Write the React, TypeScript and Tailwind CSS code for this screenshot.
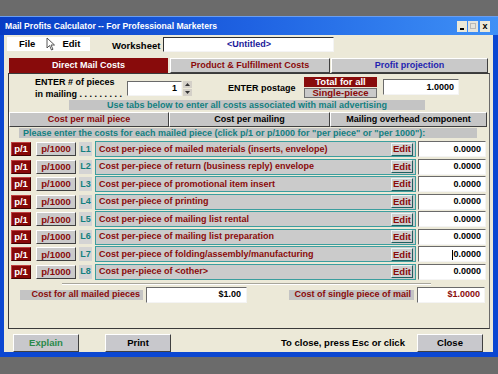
import React from "react";

const raised = "border border-t-white border-l-white border-r-[#404040] border-b-[#404040]";
const sunken = "border border-t-[#6a6a6a] border-l-[#6a6a6a] border-r-[#f4f4f4] border-b-[#f4f4f4]";

const rows = [
  "Cost per-piece of mailed materials (inserts, envelope)",
  "Cost per-piece of return (business reply) envelope",
  "Cost per-piece of promotional item insert",
  "Cost per-piece of printing",
  "Cost per-piece of mailing list rental",
  "Cost per-piece of mailing list preparation",
  "Cost per-piece of folding/assembly/manufacturing",
  "Cost per-piece of <other>",
];

function CostRow({ n, label }: { n: number; label: string }) {
  return (
    <div className="flex h-[16px] items-center">
      <div className="ml-[2px] flex h-[14px] w-[20px] items-center justify-center bg-[#860808] text-[9.5px] text-white border border-t-[#c04040] border-l-[#c04040] border-r-[#400000] border-b-[#400000]">p/1</div>
      <div className={`ml-[5px] flex h-[14px] w-[40px] items-center justify-center bg-[#cacaca] text-[9.5px] text-[#8a0a0a] ${raised}`}>p/1000</div>
      <div className="ml-[3px] flex h-[14px] w-[13px] items-center justify-center bg-[#d4d4d4] text-[#137f7f]">L{n}</div>
      <div className="ml-[3px] flex h-[16px] w-[321px] items-center border border-[#3c9e9e] bg-[#cbcbcb] pl-[3px] pr-[2px]">
        <span className="flex-1 text-[#8a0a0a]">{label}</span>
        <div className="flex h-[13px] w-[22px] items-center justify-center border border-t-[#e8f4f4] border-l-[#e8f4f4] border-r-[#1f6060] border-b-[#1f6060] bg-[#cfcfcf] text-[9.5px] text-[#8a0a0a]">Edit</div>
      </div>
      <div className={`ml-[2px] flex h-[16px] w-[68px] items-center justify-end bg-white pr-[4px] text-black ${sunken}`}>
        {n === 7 ? <span className="relative"><span className="absolute -left-[1px] top-[0px] h-[10px] w-[1px] bg-black" />0.0000</span> : "0.0000"}
      </div>
    </div>
  );
}

export default function App() {
  return (
    <div className="flex h-[374px] w-[498px] flex-col overflow-hidden bg-[#6b6b6b] font-['Liberation_Sans',Arial,sans-serif] text-[9px] font-bold leading-none">
      <div className="h-[16px] shrink-0" />
      <div className="flex h-[341px] shrink-0 flex-col bg-[#0b47d2] pb-[5px] pl-[4px] pr-[5px]">
        {/* title bar */}
        <div className="-ml-[4px] -mr-[5px] flex h-[19px] shrink-0 items-center border-t border-[#6a9ef0] bg-gradient-to-r from-[#083cc4] via-[#1f62e2] to-[#3f90f6] pl-[5px] pr-[8px]">
          <span className="flex-1 text-[8.6px] text-white">Mail Profits Calculator -- For Professional Marketers</span>
          <div className="flex gap-[1px]">
            <div className="flex h-[11px] w-[10px] items-end justify-center bg-[#ece9d8] pb-[2px]"><div className="h-[2px] w-[4px] bg-black" /></div>
            <div className="flex h-[11px] w-[10px] items-center justify-center bg-[#e6e4dc]"><div className="h-[6px] w-[6px] border border-[#b8b8b8]" /></div>
            <div className="ml-[1px] flex h-[11px] w-[10px] items-center justify-center bg-[#ece9d8] text-[9px] text-black">x</div>
          </div>
        </div>

        {/* client */}
        <div className="flex flex-1 flex-col bg-[#ece9d8]">
          {/* menu */}
          <div className="flex h-[20px] shrink-0 items-start pt-[2px]">
            <div className="relative ml-[3px] flex h-[14px] w-[83px] items-center bg-white text-[9.5px] text-black">
              <span className="ml-[12px]">File</span>
              <span className="ml-[27px]">Edit</span>
              <svg className="absolute left-[39px] top-[0px]" width="10" height="14" viewBox="0 0 10 14">
                <path d="M1 1 L1 11 L3.5 8.5 L5.5 13 L7 12.3 L5 8 L8.5 8 Z" fill="white" stroke="#444" strokeWidth="0.9" strokeLinejoin="round" />
              </svg>
            </div>
            <span className="ml-[22px] mt-[4px] text-[9.5px] text-black">Worksheet</span>
            <div className={`ml-[3px] flex h-[15px] w-[171px] items-center justify-center bg-white text-[#1a1a9a] ${sunken} border-t-[#303030] border-l-[#303030]`}>&lt;Untitled&gt;</div>
          </div>

          {/* main tabs */}
          <div className="mt-[3px] flex h-[15px] shrink-0 pl-[5px]">
            <div className="flex h-[15px] w-[159px] items-center justify-center bg-[#880b0b] text-white">Direct Mail Costs</div>
            <div className={`ml-[2px] flex h-[15px] w-[160px] items-center justify-center bg-[#c9c9c9] text-[#8a0a0a] ${raised}`}>Product &amp; Fulfillment Costs</div>
            <div className={`ml-[1px] flex h-[15px] w-[157px] items-center justify-center bg-[#c9c9c9] text-[#1f1fb0] ${raised}`}>Profit projection</div>
          </div>

          {/* panel */}
          <div className="ml-[4px] flex h-[256px] w-[482px] shrink-0 flex-col border border-[#3a3a3a] border-r-[#6a6a6a]">
            {/* row A */}
            <div className="flex h-[26px] shrink-0 items-start">
              <div className="ml-[26px] mt-[4px] flex w-[92px] shrink-0 flex-col gap-[3px] text-black">
                <span>ENTER # of pieces</span>
                <span>in mailing . . . . . . . . .</span>
              </div>
              <div className={`mt-[7px] flex h-[15px] w-[55px] shrink-0 items-center justify-end bg-white pr-[4px] text-black ${sunken}`}>1</div>
              <div className="ml-[1px] mt-[7px] flex h-[15px] w-[9px] shrink-0 flex-col gap-[1px]">
                <div className="flex flex-1 items-center justify-center bg-[#d4d0c8]"><svg width="5" height="3" viewBox="0 0 5 3"><path d="M0 3 L2.5 0 L5 3Z" fill="#333" /></svg></div>
                <div className="flex flex-1 items-center justify-center bg-[#d4d0c8]"><svg width="5" height="3" viewBox="0 0 5 3"><path d="M0 0 L2.5 3 L5 0Z" fill="#333" /></svg></div>
              </div>
              <span className="ml-[36px] mt-[10px] w-[76px] shrink-0 text-black">ENTER postage</span>
              <div className="mt-[3px] flex shrink-0 flex-col gap-[1px]">
                <div className="flex h-[10px] w-[73px] items-center justify-center bg-[#880b0b] text-[9.5px] text-white">Total for all</div>
                <div className="flex h-[10px] w-[73px] items-center justify-center border border-[#707070] bg-[#c9c9c9] text-[9.5px] text-[#8a0a0a]">Single-piece</div>
              </div>
              <div className={`ml-[6px] mt-[5px] flex h-[16px] w-[76px] shrink-0 items-center justify-end bg-white pr-[4px] text-black ${sunken}`}>1.0000</div>
            </div>

            <div className="ml-[60px] flex h-[10px] w-[356px] shrink-0 items-center justify-center bg-[#c4c4c4] text-[#137f7f]">Use tabs below to enter all costs associated with mail advertising</div>

            {/* sub tabs */}
            <div className="mt-[2px] flex h-[15px] shrink-0">
              <div className={`flex h-[15px] w-[160px] items-center justify-center bg-[#c6c6c6] text-[#8a0a0a] ${raised}`}>Cost per mail piece</div>
              <div className={`flex h-[15px] w-[161px] items-center justify-center bg-[#c6c6c6] text-black ${raised}`}>Cost per mailing</div>
              <div className={`flex h-[15px] w-[157px] items-center justify-center bg-[#c6c6c6] text-black ${raised}`}>Mailing overhead component</div>
            </div>

            <div className="ml-[10px] mt-[1px] flex h-[10px] w-[458px] shrink-0 items-center bg-[#c4c4c4] pl-[4px] text-[#137f7f]">Please enter the costs for each mailed piece (click p/1 or p/1000 for "per piece" or "per 1000"):</div>

            {/* rows */}
            <div className="mt-[3px] flex flex-col gap-[1.57px]">
              {rows.map((r, i) => (
                <CostRow key={i} n={i + 1} label={r} />
              ))}
            </div>

            <div className="ml-[53px] mt-[3px] h-[2px] w-[369px] shrink-0 border-t border-b border-t-[#a8a69c] border-b-white" />

            {/* totals */}
            <div className="mt-[2px] flex h-[16px] shrink-0 items-center">
              <div className="ml-[11px] flex h-[10px] w-[123px] items-center justify-end bg-[#c4c4c4] pr-[3px] text-[#8a0a0a]">Cost for all mailed pieces</div>
              <div className={`ml-[3px] flex h-[16px] w-[101px] items-center justify-end bg-white pr-[5px] text-black ${sunken}`}>$1.00</div>
              <div className="ml-[42px] flex h-[10px] w-[125px] items-center justify-end bg-[#c4c4c4] pr-[3px] text-[#8a0a0a]">Cost of single piece of mail</div>
              <div className={`ml-[3px] flex h-[16px] w-[68px] items-center justify-end bg-white pr-[4px] text-[#8a0a0a] ${sunken}`}>$1.0000</div>
            </div>
          </div>

          {/* bottom buttons */}
          <div className="mt-[5px] flex h-[18px] shrink-0 items-center">
            <div className={`ml-[9px] flex h-[18px] w-[66px] items-center justify-center bg-[#c8c8cc] text-[9.5px] text-[#2a8a4a] ${raised}`}>Explain</div>
            <div className={`ml-[26px] flex h-[18px] w-[66px] items-center justify-center bg-[#c8c8cc] text-[9.5px] text-black ${raised}`}>Print</div>
            <span className="ml-[110px] text-[9.5px] text-black">To close, press Esc or click</span>
            <div className={`ml-auto mr-[10px] flex h-[18px] w-[66px] items-center justify-center bg-[#c8c8cc] text-[9.5px] text-black ${raised}`}>Close</div>
          </div>
        </div>
      </div>
    </div>
  );
}
